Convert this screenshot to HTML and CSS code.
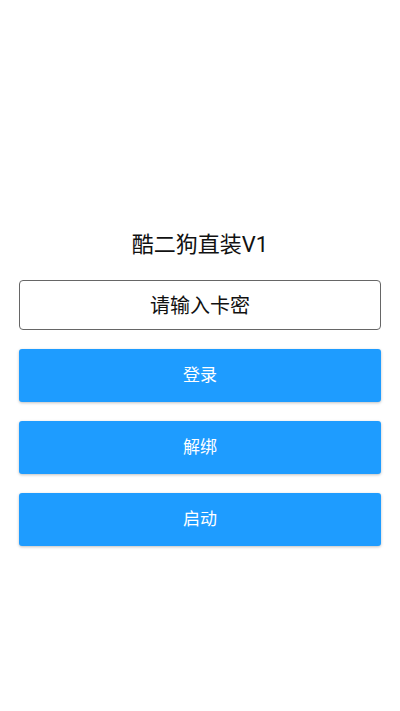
FILE: index.html
```html
<!DOCTYPE html>
<html lang="zh-CN">
<head>
<meta charset="utf-8">
<title>酷二狗直装V1</title>
<link rel="stylesheet" href="styles.css">
</head>
<body>
<main class="page">
  <h1 class="title">酷二狗直装V1</h1>
  <div class="field">请输入卡密</div>
  <div class="actions">
    <button class="btn">登录</button>
    <button class="btn">解绑</button>
    <button class="btn">启动</button>
  </div>
</main>
</body>
</html>
```

FILE: styles.css
```css
html, body {
  margin: 0;
  padding: 0;
  background: #ffffff;
}
body {
  width: 400px;
  height: 711px;
  font-family: Roboto, "Noto Sans CJK SC", sans-serif;
  color: #111111;
}
.page {
  display: flex;
  flex-direction: column;
  padding: 230px 19px 0;
}
.title {
  margin: 0;
  font-size: 22px;
  line-height: 30px;
  font-weight: 400;
  text-align: center;
  color: #111111;
}
.field {
  margin-top: 20px;
  height: 50px;
  box-sizing: border-box;
  border: 1px solid #666666;
  border-radius: 4px;
  display: flex;
  align-items: center;
  justify-content: center;
  padding-bottom: 2px;
  font-size: 20px;
  color: #111111;
}
.actions {
  display: flex;
  flex-direction: column;
  gap: 19px;
  margin-top: 19px;
}
.btn {
  height: 53px;
  border: none;
  border-radius: 3px;
  background: #1e9cff;
  color: #ffffff;
  font-family: Roboto, "Noto Sans CJK SC", sans-serif;
  font-size: 17px;
  box-shadow: 0 1px 3px rgba(0, 0, 0, 0.25);
  padding: 0 0 5px;
}
```
